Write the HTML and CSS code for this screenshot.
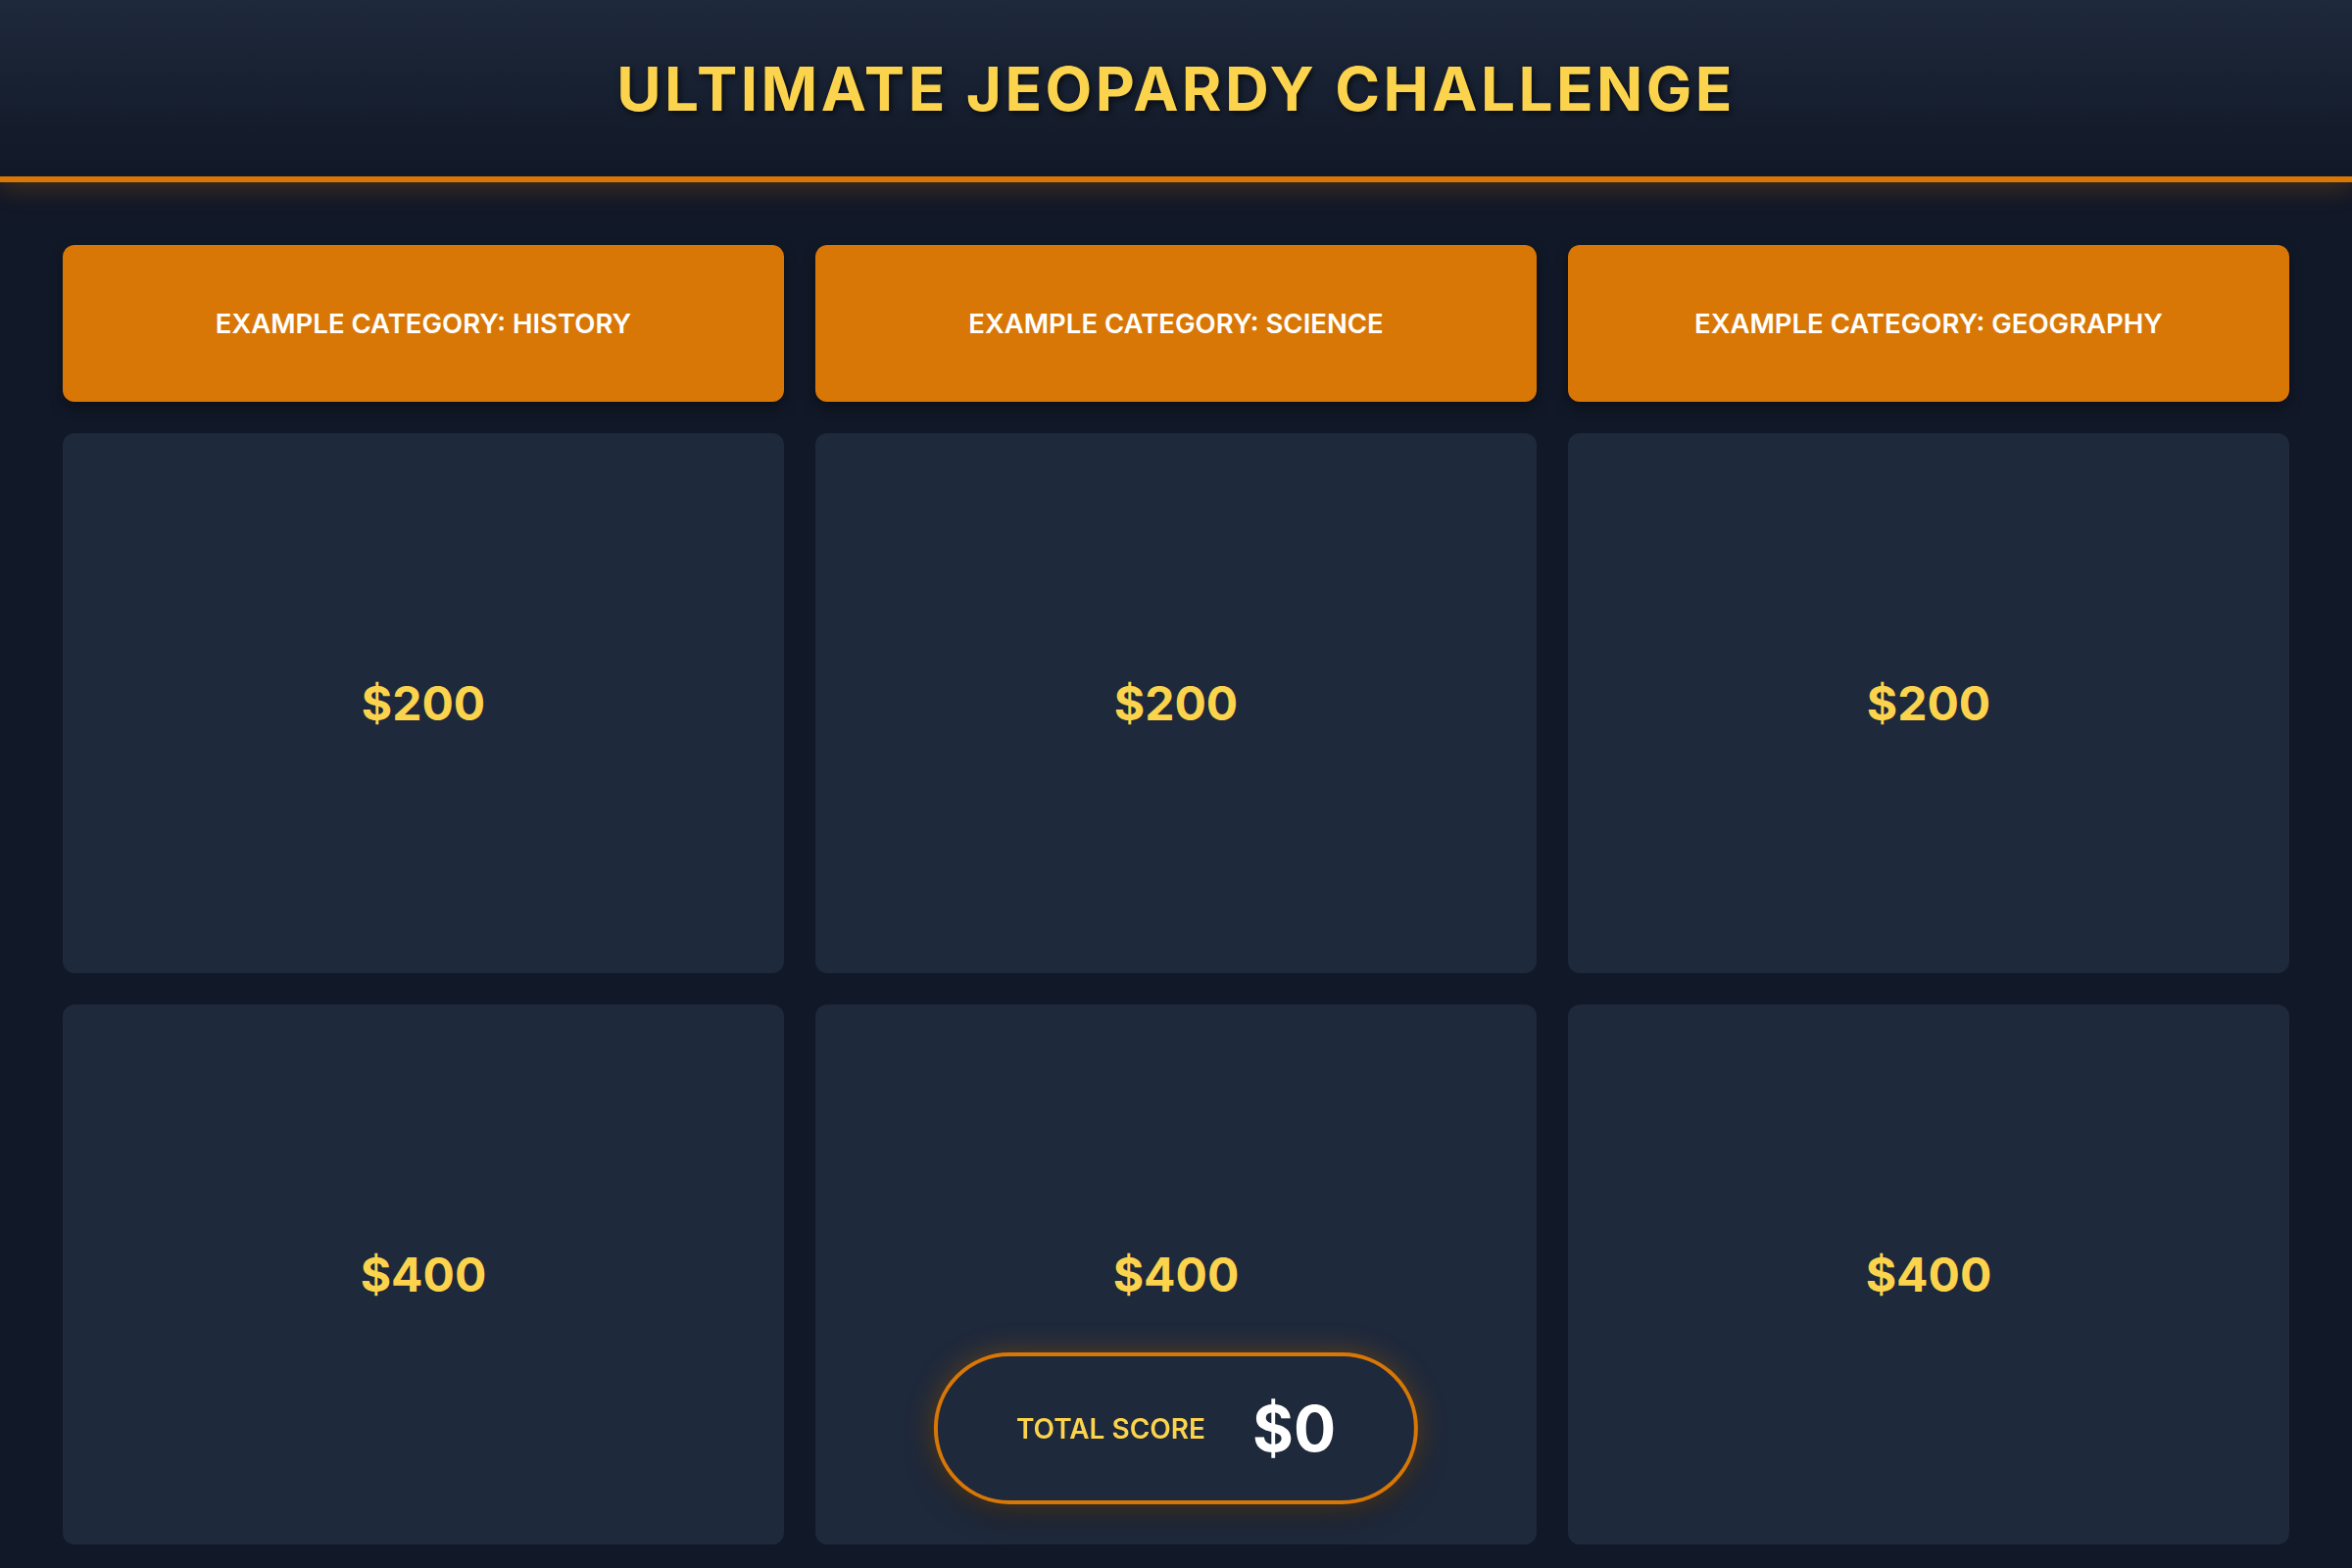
FILE: index.html
```html
<!DOCTYPE html>
<html lang="en">
<head>
    <meta charset="UTF-8">
    <meta name="viewport" content="width=device-width, initial-scale=1.0">
    <title>Ultimate Jeopardy Challenge</title>
    <link rel="stylesheet" href="styles.css">
</head>
<body>
    <header class="top_bar">
        <h1 class="title">ULTIMATE JEOPARDY CHALLENGE</h1>
    </header>
    <main class="board">
        <div class="category">EXAMPLE CATEGORY: HISTORY</div>
        <div class="category">EXAMPLE CATEGORY: SCIENCE</div>
        <div class="category">EXAMPLE CATEGORY: GEOGRAPHY</div>

        <div class="tile">$200</div>
        <div class="tile">$200</div>
        <div class="tile">$200</div>

        <div class="tile">$400</div>
        <div class="tile">$400</div>
        <div class="tile">$400</div>
    </main>
    <div class="score">
        <span class="score_label">TOTAL SCORE</span>
        <span class="score_value">$0</span>
    </div>
</body>
</html>
```

FILE: styles.css
```css
* {margin: 0; padding: 0; box-sizing: border-box;}

body
{
    background: #111827;
    font-family: Inter, "Noto Sans", sans-serif;
    height: 1600px;
    overflow: hidden;
}

.top_bar
{
    height: 186px;
    display: flex;
    align-items: center;
    justify-content: center;
    background: linear-gradient(to bottom, #1e293b, #111827);
    border-bottom: 6px solid #d97706;
    box-shadow: 0 6px 24px rgba(217, 119, 6, 0.25);
}

.title
{
    color: #fcd34d;
    font-size: 62px;
    font-weight: 700;
    letter-spacing: 0.055em;
    text-shadow: 2px 3px 6px rgba(0, 0, 0, 0.6);
}

.board
{
    display: grid;
    grid-template-columns: repeat(3, 1fr);
    grid-template-rows: 160px 551px 551px;
    gap: 32px;
    padding: 64px 64px 0;
}

.category
{
    background: #d97706;
    color: #ffffff;
    border-radius: 12px;
    display: flex;
    align-items: center;
    justify-content: center;
    font-size: 27.5px;
    font-weight: 600;
    box-shadow: 0 6px 14px rgba(0, 0, 0, 0.35);
}

.tile
{
    background: #1e293b;
    color: #fcd34d;
    border-radius: 12px;
    display: flex;
    align-items: center;
    justify-content: center;
    font-size: 48px;
    font-weight: 700;
}

.score
{
    position: fixed;
    left: 50%;
    bottom: 65px;
    transform: translateX(-50%);
    height: 155px;
    padding: 0 80px;
    display: flex;
    align-items: center;
    gap: 48px;
    background: #1e293b;
    border: 4px solid #d97706;
    border-radius: 9999px;
    box-shadow: 0 0 28px rgba(217, 119, 6, 0.35), 0 10px 30px rgba(0, 0, 0, 0.4);
}

.score_label
{
    color: #fcd34d;
    font-size: 28px;
    font-weight: 600;
}

.score_value
{
    color: #ffffff;
    font-size: 64px;
    font-weight: 700;
}
```
